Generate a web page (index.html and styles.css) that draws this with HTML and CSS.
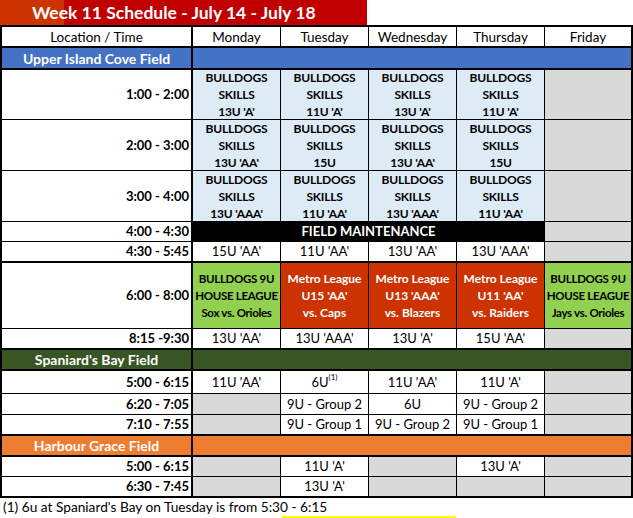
FILE: index.html
```html
<!DOCTYPE html>
<html lang="en">
<head>
  <meta charset="UTF-8">
  <meta name="viewport" content="width=device-width, initial-scale=1.0">
  <title>Week 11 Schedule</title>
  <link rel="stylesheet" href="styles.css">
</head>
<body>
  <div class="title">Week 11 Schedule - July 14 - July 18</div>

  <div class="schedule">
    <div class="row head thick">
      <div>Location / Time</div>
      <div>Monday</div>
      <div>Tuesday</div>
      <div>Wednesday</div>
      <div>Thursday</div>
      <div>Friday</div>
    </div>

    <!-- Upper Island Cove -->
    <div class="row section blue thick">
      <div>Upper Island Cove Field</div>
      <div class="span5"></div>
    </div>
    <div class="row">
      <div class="time">1:00 - 2:00</div>
      <div class="skills">BULLDOGS<br>SKILLS<br>13U 'A'</div>
      <div class="skills">BULLDOGS<br>SKILLS<br>11U 'A'</div>
      <div class="skills">BULLDOGS<br>SKILLS<br>13U 'A'</div>
      <div class="skills">BULLDOGS<br>SKILLS<br>11U 'A'</div>
      <div class="off"></div>
    </div>
    <div class="row">
      <div class="time">2:00 - 3:00</div>
      <div class="skills">BULLDOGS<br>SKILLS<br>13U 'AA'</div>
      <div class="skills">BULLDOGS<br>SKILLS<br>15U</div>
      <div class="skills">BULLDOGS<br>SKILLS<br>13U 'AA'</div>
      <div class="skills">BULLDOGS<br>SKILLS<br>15U</div>
      <div class="off"></div>
    </div>
    <div class="row">
      <div class="time">3:00 - 4:00</div>
      <div class="skills">BULLDOGS<br>SKILLS<br>13U 'AAA'</div>
      <div class="skills">BULLDOGS<br>SKILLS<br>11U 'AA'</div>
      <div class="skills">BULLDOGS<br>SKILLS<br>13U 'AAA'</div>
      <div class="skills">BULLDOGS<br>SKILLS<br>11U 'AA'</div>
      <div class="off"></div>
    </div>
    <div class="row">
      <div class="time">4:00 - 4:30</div>
      <div class="closed span4">FIELD MAINTENANCE</div>
      <div class="off"></div>
    </div>
    <div class="row thick">
      <div class="time">4:30 - 5:45</div>
      <div>15U 'AA'</div>
      <div>11U 'AA'</div>
      <div>13U 'AA'</div>
      <div>13U 'AAA'</div>
      <div class="off"></div>
    </div>
    <div class="row">
      <div class="time">6:00 - 8:00</div>
      <div class="house">BULLDOGS 9U<br>HOUSE LEAGUE<br>Sox vs. Orioles</div>
      <div class="metro">Metro League<br>U15 'AA'<br>vs. Caps</div>
      <div class="metro">Metro League<br>U13 'AAA'<br>vs. Blazers</div>
      <div class="metro">Metro League<br>U11 'AA'<br>vs. Raiders</div>
      <div class="house">BULLDOGS 9U<br>HOUSE LEAGUE<br>Jays vs. Orioles</div>
    </div>
    <div class="row thick">
      <div class="time">8:15 -9:30</div>
      <div>13U 'AA'</div>
      <div>13U 'AAA'</div>
      <div>13U 'A'</div>
      <div>15U 'AA'</div>
      <div class="off"></div>
    </div>

    <!-- Spaniard's Bay -->
    <div class="row section green thick">
      <div>Spaniard's Bay Field</div>
      <div class="span5"></div>
    </div>
    <div class="row">
      <div class="time">5:00 - 6:15</div>
      <div>11U 'AA'</div>
      <div>6U<sup>(1)</sup></div>
      <div>11U 'AA'</div>
      <div>11U 'A'</div>
      <div class="off"></div>
    </div>
    <div class="row">
      <div class="time">6:20 - 7:05</div>
      <div class="off"></div>
      <div>9U - Group 2</div>
      <div>6U</div>
      <div>9U - Group 2</div>
      <div class="off"></div>
    </div>
    <div class="row thick">
      <div class="time">7:10 - 7:55</div>
      <div class="off"></div>
      <div>9U - Group 1</div>
      <div>9U - Group 2</div>
      <div>9U - Group 1</div>
      <div class="off"></div>
    </div>

    <!-- Harbour Grace -->
    <div class="row section orange thick">
      <div>Harbour Grace Field</div>
      <div class="span5"></div>
    </div>
    <div class="row">
      <div class="time">5:00 - 6:15</div>
      <div class="off"></div>
      <div>11U 'A'</div>
      <div class="off"></div>
      <div>13U 'A'</div>
      <div class="off"></div>
    </div>
    <div class="row last">
      <div class="time">6:30 - 7:45</div>
      <div class="off"></div>
      <div>13U 'A'</div>
      <div class="off"></div>
      <div class="off"></div>
      <div class="off"></div>
    </div>
  </div>

  <p class="note">(1) 6u at Spaniard's Bay on Tuesday is from 5:30 - 6:15</p>
  <div class="highlight"></div>
</body>
</html>
```

FILE: styles.css
```css
/* Hoja de horario semanal */
body {
  margin: 0;
  font-family: Lato, "Open Sans", sans-serif;
  font-size: 13px;
  color: #000;
  background: #fff;
}

.title {
  width: 335px;
  height: 25px;
  padding-left: 32px;
  line-height: 25px;
  font-size: 17.5px;
  font-weight: bold;
  color: #fff;
  background: linear-gradient(90deg, #cc3300 0, #cc3300 64px, #c00000 64px);
}

/* Cuadricula: cada celda lleva su borde derecho e inferior */
.schedule {
  display: grid;
  grid-template-columns: 191px 88px 88px 88px 88px 86px;
  grid-template-rows: 21px 22px 50px 51px 51px 20px 21px 66px 21px 21px 23px 21px 21px 21px 20px 19px;
  width: 633px;
  box-sizing: border-box;
  border: 2px solid #000;
}

.row {
  display: contents;
}

.row > div {
  display: flex;
  align-items: center;
  justify-content: center;
  box-sizing: border-box;
  padding: 0 2px;
  border-right: 1px solid #000;
  border-bottom: 1px solid #000;
  text-align: center;
  white-space: nowrap;
  line-height: 17px;
}

.row > :first-child {
  border-right-width: 2px;
}

.row > :last-child {
  border-right: 0;
}

.row.thick > div {
  border-bottom-width: 2px;
}

.row.last > div {
  border-bottom: 0;
}

.span5 { grid-column: span 5; }
.span4 { grid-column: span 4; }

.head > div {
  font-size: 13.5px;
  padding-top: 1px;
}

/* Filas de campo */
.section > div {
  color: #fff;
  font-weight: bold;
  font-size: 14px;
}

.section.blue > div { background: #4472c4; }
.section.green > div { background: #375623; }
.section.orange > div { background: #ed7d31; }

.row > .time {
  justify-content: flex-end;
  font-weight: bold;
}

.skills {
  background: #ddebf7;
  font-weight: bold;
  font-size: 12px;
  letter-spacing: -0.2px;
}

.off {
  background: #d9d9d9;
}

.closed {
  background: #000;
  color: #fff;
  font-weight: bold;
}

.house {
  background: #92d050;
  font-weight: bold;
  font-size: 11.5px;
  letter-spacing: -0.3px;
}

.metro {
  background: #cc3300;
  color: #fff;
  font-weight: bold;
  font-size: 12px;
}

sup {
  font-size: 8px;
  line-height: 0;
  align-self: flex-start;
  margin-top: 6px;
}

.note {
  margin: 0 0 0 3px;
  line-height: 18px;
  font-size: 13.7px;
}

.highlight {
  width: 174px;
  height: 3px;
  margin-left: 282px;
  background: #ffff00;
}
```
